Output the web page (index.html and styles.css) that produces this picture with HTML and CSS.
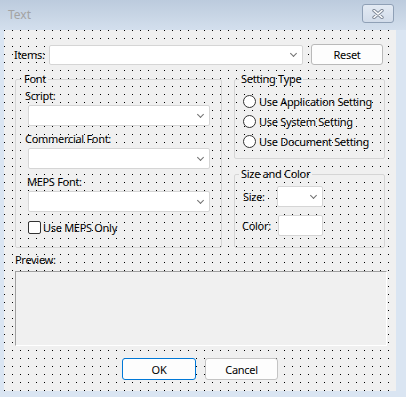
FILE: index.html
```html
<!DOCTYPE html>
<html lang="en">

<head>
  <meta charset="UTF-8" />
  <title>Text</title>
  <link rel="stylesheet" href="styles.css">
</head>

<body>

  <div class="window">
    <div class="titlebar">
      <span class="title">Text</span>
      <span class="close">
        <svg width="14" height="10" viewBox="0 0 14 10">
          <path d="M3 1.5 L11 8.5 M11 1.5 L3 8.5" stroke="#7d8796" stroke-width="3.4" stroke-linecap="round" />
          <path d="M3 1.5 L11 8.5 M11 1.5 L3 8.5" stroke="#fff" stroke-width="1.6" stroke-linecap="round" />
        </svg>
      </span>
    </div>

    <div class="client">
      <div class="items-row">
        <span class="items-label">Items:</span>
        <div class="combo items-combo"><span class="chev"></span></div>
        <button class="btn reset">Reset</button>
      </div>

      <div class="groups">
        <fieldset class="group font-group">
          <legend>Font</legend>
          <div class="field-label first">Script:</div>
          <div class="combo font-combo"><span class="chev"></span></div>
          <div class="field-label">Commercial Font:</div>
          <div class="combo font-combo"><span class="chev"></span></div>
          <div class="field-label meps">MEPS Font:</div>
          <div class="combo font-combo"><span class="chev"></span></div>
          <div class="check-row"><span class="check-box"></span>Use MEPS Only</div>
        </fieldset>

        <div class="right-col">
          <fieldset class="group setting-group">
            <legend>Setting Type</legend>
            <div class="radio-row"><span class="radio"></span>Use Application Setting</div>
            <div class="radio-row"><span class="radio"></span>Use System Setting</div>
            <div class="radio-row"><span class="radio"></span>Use Document Setting</div>
          </fieldset>

          <fieldset class="group size-group">
            <legend>Size and Color</legend>
            <div class="size-row">
              <span class="size-label">Size:</span>
              <div class="combo size-combo"><span class="chev"></span></div>
            </div>
            <div class="size-row color-row">
              <span class="size-label color-label">Color:</span>
              <div class="color-box"></div>
            </div>
          </fieldset>
        </div>
      </div>

      <div class="preview-label">Preview:</div>
      <div class="preview"></div>

      <div class="buttons">
        <button class="btn ok">OK</button>
        <button class="btn cancel">Cancel</button>
      </div>
    </div>
  </div>

</body>

</html>
```

FILE: styles.css
```css
* {
  margin: 0;
  padding: 0;
  box-sizing: border-box;
}

body {
  width: 406px;
  height: 397px;
  overflow: hidden;
  background: #dae5f2;
  font-family: 'Noto Sans', sans-serif;
  font-size: 11px;
  letter-spacing: -0.3px;
  color: #000;
}

.titlebar {
  height: 30px;
  display: flex;
  align-items: center;
  padding-left: 8px;
  background: linear-gradient(#bccbdd, #d3dfed);
}

.title {
  font-size: 12px;
  letter-spacing: 0;
  color: #a3a3a3;
  margin-top: -2px;
}

.close {
  margin-left: auto;
  margin-right: 12px;
  margin-top: -3px;
  width: 32px;
  height: 19px;
  border: 1px solid #8fa0b6;
  border-radius: 3px;
  background: linear-gradient(#e3eaf3, #d2dcea);
  display: flex;
  align-items: center;
  justify-content: center;
}

/* dialog body with the designer dot grid */
.client {
  margin-left: 4px;
  width: 392px;
  height: 361px;
  padding-left: 10px;
  background: conic-gradient(at 1px 1px, transparent 75%, #000 0) 0 0 / 8px 8px, #f0f0f0;
}

.items-row {
  display: flex;
  align-items: flex-start;
  padding-top: 14px;
  height: 35px;
}

.items-label {
  width: 35px;
  line-height: 21px;
}

.combo {
  position: relative;
  background: #fff;
  border: 1px solid #d5d5d5;
  border-radius: 2px;
  display: flex;
  align-items: center;
  justify-content: flex-end;
  padding-right: 6px;
}

.chev {
  width: 5px;
  height: 5px;
  border-right: 1px solid #707070;
  border-bottom: 1px solid #707070;
  transform: rotate(45deg);
  margin-top: -3px;
}

.items-combo {
  width: 254px;
  height: 20px;
  margin-top: 1px;
}

.btn {
  font-family: inherit;
  font-size: 11px;
  letter-spacing: -0.3px;
  color: #000;
  background: #fdfdfd;
  border: 1px solid #c4c4c4;
  border-radius: 3px;
  height: 21px;
}

.reset {
  width: 72px;
  margin-left: 8px;
  border-color: #b9b9b9;
}

.groups {
  display: flex;
  margin-top: 7px;
}

.group {
  border: 1px solid #d5d5d5;
  border-radius: 2px;
  min-width: 0;
}

.group legend {
  margin-left: -3px;
  padding: 0 2px;
  line-height: 14px;
}

.font-group {
  margin-left: 1px;
  width: 207px;
  height: 176px;
  padding: 3px 0 0 9px;
}

.field-label {
  line-height: 14px;
  margin-top: 6px;
}

.field-label.first {
  margin-top: 0;
}

.field-label.meps {
  padding-left: 2px;
}

.font-combo {
  margin: 2px 0 0 3px;
  width: 182px;
  height: 21px;
}

.check-row {
  display: flex;
  align-items: center;
  margin: 9px 0 0 3px;
  height: 13px;
}

.check-box {
  width: 13px;
  height: 13px;
  border: 1px solid #333;
  border-radius: 2px;
  background: #fff;
  margin-right: 2px;
}

.right-col {
  display: flex;
  flex-direction: column;
  margin-left: 12px;
  width: 151px;
}

.setting-group {
  height: 87px;
  padding: 5px 0 0 8px;
}

.setting-group legend,
.size-group legend {
  margin-left: -4px;
}

.radio-row {
  display: flex;
  align-items: center;
  height: 20px;
}

.radio {
  width: 13px;
  height: 13px;
  border: 1px solid #333;
  border-radius: 50%;
  background: #fff;
  margin-right: 3px;
}

.size-group {
  margin-top: 8px;
  height: 81px;
  padding: 5px 0 0 8px;
}

.size-row {
  display: flex;
  align-items: center;
  height: 21px;
}

.color-row {
  margin-top: 8px;
}

.size-label {
  width: 34px;
}

.color-label {
  width: 36px;
  margin-left: -1px;
}

.size-combo {
  width: 46px;
  height: 21px;
}

.color-box {
  width: 45px;
  height: 21px;
  background: #fff;
  border: 1px solid #d5d5d5;
  border-radius: 2px;
}

.preview-label {
  margin: 5px 0 0 1px;
  line-height: 14px;
}

.preview {
  margin: 4px 0 0 1px;
  width: 372px;
  height: 75px;
  background: #f0f0f0;
  border-top: 1px solid #a0a0a0;
  border-left: 1px solid #a0a0a0;
  border-right: 1px solid #fff;
  border-bottom: 1px solid #fff;
}

.buttons {
  display: flex;
  gap: 9px;
  margin: 12px 0 0 108px;
}

.buttons .btn {
  height: 22px;
}

.ok {
  width: 74px;
  border-color: #0078d7;
}

.cancel {
  width: 73px;
}
```
